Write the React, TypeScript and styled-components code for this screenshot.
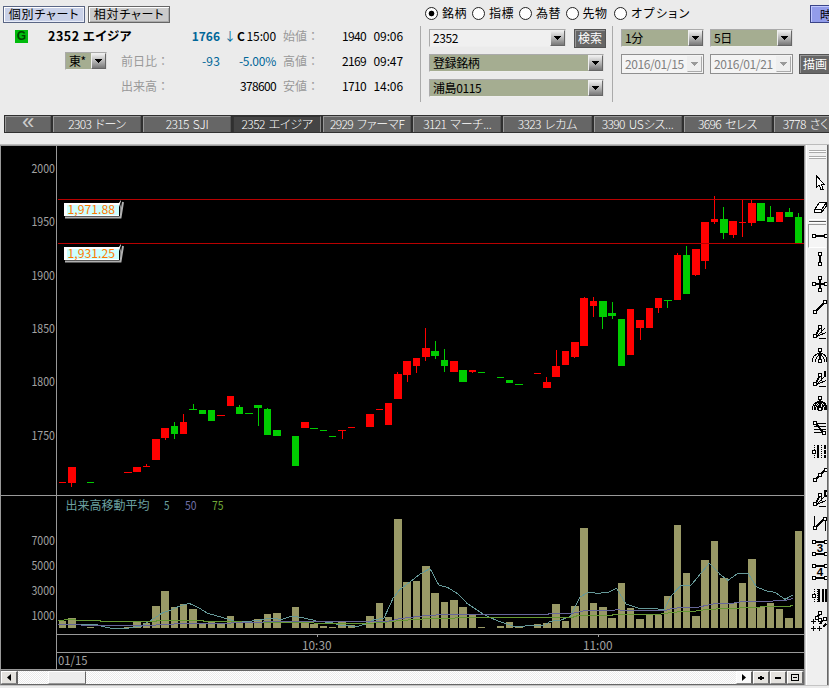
import type { ReactNode } from "react";
import styled, { createGlobalStyle, css } from "styled-components";

const GlobalStyle = createGlobalStyle`
  * {
    box-sizing: border-box;
  }

  body {
    margin: 0;
    background: #ebebeb;
    overflow: hidden;
  }
`;

const Page = styled.div`
  width: 829px;
  height: 688px;
  overflow: hidden;
  display: flex;
  flex-direction: column;
  background: #ebebeb;
  color: #000;
  font-family: "Noto Sans CJK JP", "Liberation Sans", sans-serif;
  font-size: 12px;
  line-height: 14px;
  white-space: nowrap;
`;

const Top = styled.header`
  height: 115px;
  flex: none;
  display: flex;
`;

const QuotePanel = styled.section`
  width: 420px;
  flex: none;
  padding-top: 6px;
`;

const ModeRow = styled.div`
  display: flex;
  gap: 3px;
  padding-left: 3px;
  height: 18px;
`;

const ModeButton = styled.button<{ $active?: boolean }>`
  width: 82px;
  height: 17px;
  padding: 0 0 1px;
  font: inherit;
  line-height: 12px;
  font-feature-settings: "palt";
  letter-spacing: 0.8px;
  color: #000;
  background: ${(p) => (p.$active ? "#c9d1e8" : "#cbcbcb")};
  border: 1px solid ${(p) => (p.$active ? "#5a6685" : "#666")};
  box-shadow: inset 1px 1px 0 #fff, inset -1px -1px 0 ${(p) => (p.$active ? "#e8ecf8" : "#aaa")};
`;

const QuoteRow = styled.div<{ $height: number }>`
  display: flex;
  align-items: center;
  height: ${(p) => p.$height}px;
`;

const Lead = styled.div<{ $pad: number }>`
  width: 190px;
  flex: none;
  display: flex;
  align-items: center;
  padding-left: ${(p) => p.$pad}px;
`;

const Badge = styled.span`
  width: 13px;
  height: 13px;
  background: #00bb0c;
  color: #004400;
  font: bold 12px/13px "Liberation Sans", sans-serif;
  text-align: center;
`;

const StockName = styled.strong`
  margin-left: 20px;
  font-size: 12.5px;
  font-feature-settings: "palt";
  letter-spacing: 0.5px;
`;

const digits = css`
  letter-spacing: -0.66px;
`;

// $loose widens values with narrow marks (colon, sign, point) to the digit pitch
const Num = styled.span<{ $width: number; $blue?: boolean; $bold?: boolean; $loose?: number }>`
  width: ${(p) => p.$width}px;
  flex: none;
  text-align: right;
  color: ${(p) => (p.$blue ? "#006699" : "#000")};
  font-weight: ${(p) => (p.$bold ? 700 : 400)};
  letter-spacing: ${(p) => (p.$bold ? 0 : (p.$loose ?? -0.66))}px;
`;

const Label = styled.span`
  width: 34px;
  flex: none;
  margin-left: 7px;
  color: #999;
`;

const LeadLabel = styled.span<{ $gap: number }>`
  margin-left: ${(p) => p.$gap}px;
  color: #999;
`;

const Arrow = styled.span`
  width: 11px;
  flex: none;
  padding-left: 4px;
  color: #006699;
`;

const Close = styled.b`
  width: 15px;
  flex: none;
  padding-left: 6px;
`;

const Controls = styled.section`
  flex: none;
  width: 409px;
  display: flex;
  flex-direction: column;
`;

const RadioRow = styled.div`
  display: flex;
  height: 26px;
  padding-left: 5px;
`;

const RadioItem = styled.label<{ $width: number; $wide?: boolean }>`
  width: ${(p) => p.$width}px;
  flex: none;
  display: flex;
  align-items: center;
  gap: 4px;
  font-feature-settings: "palt";
  letter-spacing: ${(p) => (p.$wide ? 1.4 : 0.4)}px;
`;

const Dot = styled.span<{ $on?: boolean }>`
  width: 13px;
  height: 13px;
  border-radius: 50%;
  border: 1px solid #222;
  background: ${(p) => (p.$on ? "radial-gradient(circle, #000 0 2.5px, #fff 3.2px)" : "#fff")};
`;

const ModeLink = styled.button`
  width: 40px;
  height: 18px;
  flex: none;
  margin-top: 5px;
  padding: 0 0 0 9px;
  text-align: left;
  font: inherit;
  line-height: 13px;
  background: #929cea;
  border: 1px solid #3a4488;
  box-shadow: inset 1px 1px 0 #c0c8ff;
`;

const Forms = styled.div`
  display: flex;
  height: 76px;
`;

const SymbolForm = styled.div`
  width: 192px;
  flex: none;
  display: flex;
  flex-direction: column;
  gap: 7px;
  padding: 3px 0 0 8px;
  border-left: 1px solid #aaa;
`;

const RangeForm = styled.div`
  display: flex;
  flex-direction: column;
  gap: 7px;
  padding: 3px 0 0 8px;
  border-left: 1px solid #aaa;
`;

const Line = styled.div<{ $gap: number; $lift?: boolean }>`
  display: flex;
  gap: ${(p) => p.$gap}px;
  margin-top: ${(p) => (p.$lift ? -1 : 0)}px;
`;

const SelectBox = styled.div<{ $width: number; $tone?: "plain" | "date" }>`
  width: ${(p) => p.$width}px;
  height: ${(p) => (p.$tone === "date" ? 20 : 18)}px;
  flex: none;
  display: flex;
  align-items: center;
  justify-content: space-between;
  padding-left: 3px;
  border: 1px solid #aaa;
  letter-spacing: -0.4px;
  ${(p) =>
    p.$tone === "date"
      ? css`
          border-color: #8f8f8f;
          color: #808080;
          background: #f4f4f4;
          padding-right: 1px;
        `
      : css`
          border-right-color: #ddd;
          border-bottom-color: #eee;
          background: ${p.$tone === "plain" ? "#f0f0f0" : "#a5ad91"};
        `}
`;

const DropButton = styled.span<{ $disabled?: boolean }>`
  width: 15px;
  height: 16px;
  flex: none;
  display: flex;
  align-items: center;
  justify-content: center;
  border: 1px solid ${(p) => (p.$disabled ? "#aaa" : "#666")};
  border-top-color: #eee;
  border-left-color: #eee;
  background: ${(p) => (p.$disabled ? "#eee" : "linear-gradient(#eee, #aaa 60%, #777)")};
  color: ${(p) => (p.$disabled ? "#999" : "#000")};
`;

const DarkButton = styled.button<{ $tall?: boolean }>`
  width: 32px;
  height: ${(p) => (p.$tall ? 20 : 19)}px;
  flex: none;
  padding: 0 0 1px;
  font: inherit;
  line-height: 14px;
  color: #fff;
  background: #666;
  border: 1px solid #555;
  box-shadow: inset 1px 1px 0 #999;
`;

const TabStrip = styled.nav`
  display: flex;
  flex: none;
  gap: 2px;
  height: 18px;
  margin: 0 0 11px 4px;
  padding: 1px;
  background: #303030;
`;

const Tab = styled.div<{ $width?: number; $active?: boolean }>`
  width: ${(p) => p.$width ?? 88.1}px;
  height: 16px;
  flex: none;
  display: flex;
  align-items: center;
  justify-content: center;
  gap: 4px;
  padding-bottom: 1px;
  color: #fff;
  background: ${(p) => (p.$active ? "#444" : "#666")};
  border-top: 1px solid ${(p) => (p.$active ? "#333" : "#999")};
  border-left: 1px solid ${(p) => (p.$active ? "#333" : "#999")};
  border-right: 1px solid ${(p) => (p.$active ? "#888" : "#555")};
  font-weight: 300;
`;

const Code = styled.span`
  ${digits}
`;

const Company = styled.span`
  font-feature-settings: "palt";
  letter-spacing: -0.2px;
`;

const Back = styled.span`
  font-size: 22px;
  line-height: 12px;
  padding-bottom: 4px;
  color: #ccc;
  font-family: "Liberation Sans", sans-serif;
`;

const Body = styled.main`
  display: flex;
  height: 542px;
  flex: none;
  border-top: 1px solid #bbb;
  border-bottom: 1px solid #c4c4c4;
`;

const ChartColumn = styled.div`
  width: 804px;
  flex: none;
`;

const ChartSvg = styled.svg`
  display: block;
  background: #000;

  text {
    font-family: "Noto Sans CJK JP", sans-serif;
    font-size: 12px;
    font-weight: 400;
    fill: #a2a2a2;
  }
`;

const ScrollBar = styled.div`
  display: flex;
  height: 15px;
  border-top: 1px solid #666;
  border-bottom: 1px solid #666;
  border-left: 1px solid #999;
  background: repeating-conic-gradient(#fff 0 25%, #eaeaea 0 50%) 0 0 / 2px 2px;
`;

const ScrollButton = styled.span<{ $width: number; $push?: boolean; $flat?: boolean }>`
  width: ${(p) => p.$width}px;
  height: 13px;
  flex: none;
  display: flex;
  align-items: center;
  justify-content: center;
  margin-left: ${(p) => (p.$push ? "auto" : "0")};
  background: ${(p) => (p.$flat ? "#fafafa" : "#e4e2de")};
  border: 1px solid #fff;
  border-right: 2px solid #666;
  border-bottom: 1px solid #888;
`;

const Thumb = styled.span`
  width: 38px;
  height: 13px;
  margin-left: 30px;
  background: #ededed;
  border: 1px solid #fff;
  border-right-color: #666;
  border-bottom-color: #999;
`;

const ToolBar = styled.aside`
  width: 25px;
  flex: none;
  display: flex;
  flex-direction: column;
  background: #efefef;
  border-left: 1px solid #999;
  border-right: 1px solid #999;
  box-shadow: inset 1px 0 0 #d0d0d0, inset 2px 0 0 #fff, inset -1px 0 0 #666;
  padding-top: 5px;
`;

const Grip = styled.div<{ $last?: boolean }>`
  width: 17px;
  height: 3px;
  margin: 0 0 ${(p) => (p.$last ? 12 : 3)}px 4px;
  border-top: 1px solid #aaa;
  border-bottom: 1px solid #aaa;
  background: #fff;
`;

const ToolDivider = styled.div`
  height: 5px;
  margin: 0 2px 0 4px;
  border-top: 1px solid #fff;
  background: linear-gradient(#efefef 1px, #555 1px 2px, #fff 2px 3px, #efefef 3px);
`;

const Tool = styled.div<{ $pressed?: boolean }>`
  height: 24px;
  flex: none;
  margin: 0 2px 0 3px;
  padding-left: 2px;
  border: 1px solid transparent;
  border-right: 0;
  ${(p) =>
    p.$pressed &&
    css`
      border-color: #999;
      border-bottom-color: #fff;
      background: #f5f5f5;
    `}

  svg {
    display: block;
    margin-top: -1px;
  }
`;

type Candle = {
  x: number;
  w: number;
  top: number;
  bottom: number;
  up: boolean;
  vol: number;
  wick?: [x: number, high: number, low: number];
};

const c = (
  x: number,
  w: number,
  top: number,
  bottom: number,
  dir: "u" | "d",
  vol: number,
  wick?: [number, number, number],
): Candle => ({ x, w, top, bottom, up: dir === "u", vol, wick });

const candles: Candle[] = [
  c(59, 7, 482, 483, "u", 621),
  c(68, 8, 467, 483, "u", 618, [71, 467, 487]),
  c(87, 7, 482, 483, "d", 627),
  c(124, 8, 472, 473, "u", 627),
  c(133, 8, 467, 472, "u", 622),
  c(143, 7, 466, 467, "u", 623, [146, 464, 467]),
  c(152, 8, 439, 460, "u", 606),
  c(161, 8, 428, 438, "u", 591, [165, 428, 440]),
  c(171, 7, 426, 434, "d", 607, [174, 422, 439]),
  c(180, 7, 422, 434, "u", 604, [183, 414, 434]),
  c(189, 8, 409, 410, "d", 609, [193, 404, 410]),
  c(199, 7, 410, 414, "d", 624),
  c(208, 7, 410, 421, "d", 622),
  c(217, 8, 415, 416, "u", 624),
  c(227, 7, 396, 406, "u", 616),
  c(236, 7, 407, 414, "d", 623, [239, 405, 414]),
  c(245, 8, 413, 414, "d", 623),
  c(254, 8, 405, 408, "d", 619, [258, 405, 426]),
  c(264, 7, 409, 435, "d", 614, [267, 408, 435]),
  c(273, 8, 430, 436, "d", 613),
  c(292, 7, 436, 466, "d", 607),
  c(301, 8, 422, 428, "u", 623),
  c(310, 8, 428, 429, "d", 624),
  c(320, 7, 430, 431, "d", 626),
  c(329, 7, 436, 437, "d", 627),
  c(338, 8, 430, 431, "u", 622, [342, 430, 439]),
  c(348, 7, 427, 428, "u", 625),
  c(366, 8, 414, 427, "u", 616),
  c(376, 7, 409, 410, "u", 603),
  c(385, 7, 403, 425, "u", 617),
  c(394, 8, 374, 399, "u", 519, [397, 372, 399]),
  c(403, 8, 361, 375, "u", 582, [407, 361, 382]),
  c(413, 7, 358, 366, "u", 581, [416, 358, 373]),
  c(422, 8, 348, 357, "u", 566, [425, 328, 361]),
  c(431, 8, 351, 356, "d", 593, [435, 341, 359]),
  c(441, 7, 360, 366, "d", 602, [444, 349, 372]),
  c(450, 8, 361, 372, "u", 600),
  c(459, 8, 370, 382, "d", 607),
  c(469, 7, 370, 372, "u", 614, [472, 370, 373]),
  c(478, 7, 372, 373, "d", 627),
  c(497, 7, 377, 378, "d", 626),
  c(506, 7, 380, 383, "d", 622),
  c(515, 8, 384, 385, "d", 626),
  c(534, 7, 373, 374, "u", 624),
  c(543, 8, 382, 388, "u", 623, [546, 377, 388]),
  c(552, 8, 366, 377, "u", 604, [556, 350, 377]),
  c(562, 7, 351, 365, "u", 621),
  c(571, 8, 342, 357, "u", 606, [574, 342, 358]),
  c(580, 8, 298, 346, "u", 528, [584, 297, 346]),
  c(590, 7, 301, 306, "u", 603, [593, 297, 317]),
  c(599, 8, 301, 317, "d", 607, [602, 301, 329]),
  c(608, 8, 313, 316, "d", 618, [612, 302, 319]),
  c(618, 7, 319, 366, "d", 583),
  c(627, 7, 309, 355, "u", 608),
  c(636, 8, 320, 328, "u", 619, [640, 320, 340]),
  c(646, 7, 308, 328, "u", 615),
  c(655, 7, 298, 308, "u", 615, [658, 298, 313]),
  c(664, 8, 300, 301, "d", 596, [667, 300, 308]),
  c(674, 7, 255, 300, "u", 525, [677, 253, 300]),
  c(683, 7, 255, 294, "d", 573, [686, 246, 294]),
  c(692, 8, 249, 275, "u", 616, [695, 249, 276]),
  c(701, 8, 222, 261, "u", 560, [705, 222, 269]),
  c(711, 7, 219, 222, "u", 541, [714, 196, 224]),
  c(720, 8, 219, 233, "d", 578, [723, 207, 239]),
  c(729, 8, 221, 235, "u", 603, [733, 221, 238]),
  c(739, 7, 222, 223, "u", 583, [742, 199, 237]),
  c(748, 8, 203, 223, "u", 559, [751, 200, 226]),
  c(757, 8, 203, 221, "d", 607),
  c(767, 7, 217, 222, "d", 603, [770, 206, 222]),
  c(776, 7, 212, 222, "u", 609),
  c(785, 8, 212, 217, "d", 618, [789, 208, 217]),
  c(795, 7, 217, 243, "d", 531, [798, 213, 243]),
];

const ma5 =
  "58,625 65,624 81,624 97,624.6 103,626.6 112,628.4 127,628.4 135,627 141,626.3 148,622 155,618 161,613.6 170,610.3 179,606.3 189,603.4 198,607.3 207,613 217,616 228,619 234,621 245,621.6 257,620.6 269,618.3 282,619.3 291,616.3 301,617.3 314,620.3 317,621.5 330,622.3 340,625 357,626.6 368,623.3 372,620.3 384,618 393,598.3 400,589.3 410,582 420,574 430,568.6 439,585.3 448,587.6 458,594 467,603.3 483,614 497,620.6 514,626.3 523,626.3 530,625.3 545,625 550,621.3 560,620.3 570,616.6 575,607 580,597 588,592.3 598,593.3 608,592.3 616.6,588.3 626,604 640,608.6 655,608.6 664,610 671,596 681,585.3 691,585.3 700,574.3 709.3,563.3 720,574.3 728,580.3 738,573.3 748,573.3 756.6,587 766.6,591 775,592.3 785,599.3 793,595";
const ma50 =
  "58,624.5 80,624.5 82,625.5 155,625.5 157,624.5 173,624.5 175,623.5 230,623.5 232,622.5 240,622.5 286,621.5 387,621.5 400,618.6 417,616.6 427,615.5 445,614.5 547,614.5 550,613.5 572,613.5 583,611 590,610.5 612,610.5 618,609.5 622,610.5 665,610.5 672,608.5 683,607.5 697,607.5 710,604.5 717,603.5 733,603.2 743,601.5 770,601.2 787,600 793,598.5";
const ma75 =
  "58,620.5 70,619.5 81,620.5 100,620.5 101,621.5 156,621.5 157,620.5 203,620.5 204,621.5 238,621.5 245,622.5 313,622.5 315,623.5 368,623.5 387,622 400,620.5 417,619.5 430,618.5 453,618.5 457,617.5 572,617.5 578,615.5 612,615.5 613,614.5 658,614.5 673,612.2 695,611.2 707,609.4 727,608.5 753,607.5 767,606.5 788,606.5 793,605.5";

const priceTicks: [string, number][] = [
  ["2000", 168.5],
  ["1950", 221.5],
  ["1900", 275.5],
  ["1850", 328.5],
  ["1800", 381.5],
  ["1750", 435.5],
];

const volumeTicks: [string, number][] = [
  ["7000", 540.5],
  ["5000", 565.5],
  ["3000", 590.5],
  ["1000", 615.5],
];

const AxisText = ({ x, y, children, fill }: { x: number; y: number; children: string; fill?: string }) => (
  <text
    x={x}
    y={y + 4.5}
    textLength={children.length * 6 - 0.5}
    lengthAdjust="spacingAndGlyphs"
    style={fill ? { fill } : undefined}
  >
    {children}
  </text>
);

const PriceTag = ({ y, value }: { y: number; value: string }) => (
  <g>
    <path d={`M65 ${y + 14.5}H120.5L123 ${y - 1}`} fill="none" stroke="#b0b0b0" strokeWidth="2" />
    <path d={`M64 ${y}H119L121 ${y - 3}L120 ${y + 13}H64Z`} fill="#fff" />
    <rect x="67" y={y + 2} width="52" height="10" fill="#ccffff" />
    <path d={`M119.5 ${y + 13}V${y + 4}L121.5 ${y - 2}`} fill="none" stroke="#000" />
    <AxisText x={67.5} y={y + 6.5} fill="#ff7800">
      {value}
    </AxisText>
  </g>
);

const Chart = () => (
  <ChartSvg width="804" height="525" viewBox="0 145 804 525">
    <g shapeRendering="crispEdges">
      {candles.map((k) => (
        <g key={k.x} fill={k.up ? "#ff0000" : "#00cc00"}>
          {k.wick && <rect x={k.wick[0]} y={k.wick[1]} width="1" height={k.wick[2] - k.wick[1]} />}
          <rect x={k.x} y={k.top} width={k.w} height={k.bottom - k.top} />
          <rect x={k.x} y={k.vol} width={k.w} height={628 - k.vol} fill="#999966" />
        </g>
      ))}
      <path d="M58 199.5H804M58 243.5H804" stroke="#b80000" />
      <g fill="none">
        <polyline points={ma5} stroke="#669999" />
        <polyline points={ma75} stroke="#669933" />
        <polyline points={ma50} stroke="#666699" />
      </g>
      <path
        d="M0 145.5H804M.5 145V670M56.5 145V670M0 495.5H804M56 634.5H804M56 652.5H804M0 669.5H804M317.5 635V637M598.5 635V637"
        stroke="#999"
        fill="none"
      />
    </g>
    {[...priceTicks, ...volumeTicks].map(([label, y]) => (
      <AxisText key={label} x={31.5} y={y}>
        {label}
      </AxisText>
    ))}
    <PriceTag y={203} value="1,971.88" />
    <PriceTag y={247} value="1,931.25" />
    <text x="65.5" y="510" style={{ fill: "#6ba0a0" }}>
      出来高移動平均
    </text>
    <AxisText x={164} y={505.5} fill="#6ba0a0">
      5
    </AxisText>
    <AxisText x={185} y={505.5} fill="#7070a8">
      50
    </AxisText>
    <AxisText x={212} y={505.5} fill="#70a838">
      75
    </AxisText>
    <AxisText x={58} y={660.5}>
      01/15
    </AxisText>
    <AxisText x={302} y={645.5}>
      10:30
    </AxisText>
    <AxisText x={583} y={645.5}>
      11:00
    </AxisText>
  </ChartSvg>
);

const Caret = () => (
  <svg width="7" height="4" viewBox="0 0 7 4" shapeRendering="crispEdges">
    <path d="M0 0h7v1h-1v1h-1v1h-1v1h-1v-1h-1v-1h-1v-1h-1z" fill="currentColor" />
  </svg>
);

const Select = ({ width, tone, children }: { width: number; tone?: "plain" | "date"; children: ReactNode }) => (
  <SelectBox $width={width} $tone={tone}>
    <span>{children}</span>
    <DropButton $disabled={tone === "date"}>
      <Caret />
    </DropButton>
  </SelectBox>
);

// 4x4 grab handle used by most of the drawing tools
const H = ({ x, y }: { x: number; y: number }) => (
  <rect x={x + 0.5} y={y + 0.5} width="3" height="3" fill="#fff" strokeWidth="1" />
);

const Thick = ({ d }: { d: string }) => <path d={d} strokeWidth="2" />;

const Fan = () => (
  <>
    <Thick d="M5 15L9 7" />
    <path d="M6 16L14 8M6 16.5L15 12.5M8 18.5H15M10 9V13" />
    <H x={7} y={5} />
    <H x={2} y={14} />
  </>
);

const Arcs = ({ dense }: { dense?: boolean }) => (
  <>
    <path d="M8 9.5C4 10 1.5 13 1.5 18M10 9.5C14 10 16 13 16 18M7 12C5 13 4.5 15 4.5 18M11 12C13 13 13.5 15 13.5 18" />
    {dense && <path d="M7 10.5C4 12 3 14 3 18M7.5 13.5C6.5 15 6 16 6 18M11 10.5C14 12 15 15 15 18M11 13.5C12 15 12 16 12 18" />}
    <Thick d="M9 7V15M7 11H11" />
    <H x={7} y={4} />
    <H x={7} y={15} />
  </>
);

const Cycle = ({ solid }: { solid?: boolean }) => (
  <>
    <path d="M3.5 5V19" strokeDasharray="1 1" />
    <H x={1} y={10} />
    {solid ? (
      <>
        <path d="M6 5V18" strokeDasharray="1 1" />
        <Thick d="M8 5V18M12 5V18M15 5V18" />
      </>
    ) : (
      <>
        <Thick d="M7 5V18" />
        <path d="M10.5 5V18" strokeDasharray="1 1" />
        <path d="M14 5V18" strokeWidth="2" strokeDasharray="4 1" />
      </>
    )}
  </>
);

const Wave = ({ n }: { n: string }) => (
  <>
    <Thick d="M4 6H14M4 18H14" />
    <H x={1} y={4} />
    <H x={13} y={4} />
    <H x={1} y={16} />
    <H x={13} y={16} />
    <text x="5.7" y="15.5" fontFamily="Liberation Sans, sans-serif" fontWeight="bold" fontSize="11.5" fill="#000" stroke="none">
      {n}
    </text>
  </>
);

const drawingTools: ReactNode[] = [
  <>
    <Thick d="M4 12H14" />
    <H x={1} y={10} />
    <H x={13} y={10} />
  </>,
  <>
    <Thick d="M9 8V15" />
    <H x={7} y={4} />
    <H x={7} y={14} />
  </>,
  <>
    <Thick d="M9 8V17M4 12H14" />
    <H x={7} y={4} />
    <H x={7} y={16} />
    <H x={1} y={10} />
    <H x={13} y={10} />
  </>,
  <>
    <Thick d="M5 15L13 7" />
    <H x={2} y={14} />
    <H x={12} y={4} />
  </>,
  <Fan />,
  <Arcs />,
  <>
    <Fan />
    <Thick d="M14 3V9" />
  </>,
  <Arcs dense />,
  <>
    <path d="M3 7.5H15M3 10.5H15M3 13.5H15M3 16.5H15" />
    <Thick d="M4 7L13 17" />
    <H x={2} y={5} />
    <H x={11} y={15} />
  </>,
  <Cycle />,
  <>
    <Thick d="M5 15L14 6" />
    <H x={2} y={14} />
    <H x={7} y={9} />
    <H x={13} y={4} />
  </>,
  <>
    <Fan />
    <path d="M16 3H14V8H16" strokeWidth="1.5" />
  </>,
  <>
    <path d="M3.5 4V15M14.5 8V19" />
    <Thick d="M5 15L12 8" />
    <H x={2} y={14} />
    <H x={12} y={5} />
  </>,
  <Wave n="3" />,
  <Wave n="4" />,
  <Cycle solid />,
  <>
    <Thick d="M5 11L8 7M9 16L12 12M12 19L15 16" />
    <H x={7} y={3} />
    <H x={4} y={8} />
    <H x={7} y={10} />
    <H x={12} y={9} />
    <path d="M0 13.5H5M2.5 11V16M0 20.5H5M2.5 18V23M6 20.5H11M8.5 18V23" />
  </>,
];

const ToolIcon = ({ children }: { children: ReactNode }) => (
  <svg width="16" height="24" viewBox="0 0 16 24" fill="none" stroke="#000" shapeRendering="crispEdges">
    {children}
  </svg>
);

const tabs: [string, string][] = [
  ["2303", "ドーン"],
  ["2315", "SJI"],
  ["2352", "エイジア"],
  ["2929", "ファーマF"],
  ["3121", "マーチ..."],
  ["3323", "レカム"],
  ["3390", "USシス..."],
  ["3696", "セレス"],
  ["3778", "さくら..."],
];

const radios: [string, number][] = [
  ["銘柄", 47],
  ["指標", 47],
  ["為替", 46.5],
  ["先物", 48.5],
  ["オプション", 196],
];

const App = () => {
  return (
    <Page>
      <GlobalStyle />
      <Top>
        <QuotePanel>
          <ModeRow>
            <ModeButton $active>個別チャート</ModeButton>
            <ModeButton>相対チャート</ModeButton>
          </ModeRow>
          <QuoteRow $height={24}>
            <Lead $pad={15}>
              <Badge>G</Badge>
              <StockName>2352 エイジア</StockName>
            </Lead>
            <Num $width={30} $blue $bold>1766</Num>
            <Arrow>↓</Arrow>
            <Close>C</Close>
            <Num $width={30} $loose={-0.1}>15:00</Num>
            <Label>始値：</Label>
            <Num $width={49}>1940</Num>
            <Num $width={37} $loose={-0.1}>09:06</Num>
          </QuoteRow>
          <QuoteRow $height={25}>
            <Lead $pad={65}>
              <Select width={42}>東*</Select>
              <LeadLabel $gap={14}>前日比：</LeadLabel>
            </Lead>
            <Num $width={30} $blue $loose={0.2}>-93</Num>
            <Num $width={56} $blue $loose={-0.25}>-5.00%</Num>
            <Label>高値：</Label>
            <Num $width={49}>2169</Num>
            <Num $width={37} $loose={-0.1}>09:47</Num>
          </QuoteRow>
          <QuoteRow $height={26}>
            <Lead $pad={121}>
              <LeadLabel $gap={0}>出来高：</LeadLabel>
            </Lead>
            <Num $width={86}>378600</Num>
            <Label>安値：</Label>
            <Num $width={49}>1710</Num>
            <Num $width={37} $loose={-0.1}>14:06</Num>
          </QuoteRow>
        </QuotePanel>

        <Controls>
          <RadioRow>
            {radios.map(([label, width], i) => (
              <RadioItem key={label} $width={width} $wide={label.length > 2}>
                <Dot $on={i === 0} />
                {label}
              </RadioItem>
            ))}
            <ModeLink>時</ModeLink>
          </RadioRow>
          <Forms>
            <SymbolForm>
              <Line $gap={8}>
                <Select width={137} tone="plain">2352</Select>
                <DarkButton>検索</DarkButton>
              </Line>
              <Line $gap={0} $lift>
                <Select width={175}>登録銘柄</Select>
              </Line>
              <Select width={175}>浦島0115</Select>
            </SymbolForm>
            <RangeForm>
              <Line $gap={6}>
                <Select width={83}>1分</Select>
                <Select width={83}>5日</Select>
              </Line>
              <Line $gap={6}>
                <Select width={83} tone="date">2016/01/15</Select>
                <Select width={83} tone="date">2016/01/21</Select>
                <DarkButton $tall>描画</DarkButton>
              </Line>
            </RangeForm>
          </Forms>
        </Controls>
      </Top>

      <TabStrip>
        <Tab $width={46}>
          <Back>«</Back>
        </Tab>
        {tabs.map(([code, name]) => (
          <Tab key={code} $active={code === "2352"} $width={code === "3778" ? 82 : undefined}>
            <Code>{code}</Code>
            <Company>{name}</Company>
          </Tab>
        ))}
      </TabStrip>

      <Body>
        <ChartColumn>
          <Chart />
          <ScrollBar>
            <ScrollButton $width={17}>
              <svg width="4" height="7" viewBox="0 0 4 7">
                <path d="M4 0V7L0 3.5Z" />
              </svg>
            </ScrollButton>
            <Thumb />
            <ScrollButton $width={17} $push $flat>
              <svg width="4" height="7" viewBox="0 0 4 7">
                <path d="M0 0V7L4 3.5Z" />
              </svg>
            </ScrollButton>
            <ScrollButton $width={17}>
              <svg width="6" height="4" viewBox="0 0 6 4" shapeRendering="crispEdges">
                <path d="M0 1H6V3H0ZM2 0H4V4H2Z" />
              </svg>
            </ScrollButton>
            <ScrollButton $width={17}>
              <svg width="6" height="2" viewBox="0 0 6 2">
                <path d="M0 0H6V2H0Z" />
              </svg>
            </ScrollButton>
            <ScrollButton $width={17}>
              <svg width="8" height="7" viewBox="0 0 8 7" shapeRendering="crispEdges">
                <path d="M.5 .5H7.5V6.5H.5ZM2 3.5H6" fill="none" stroke="#000" />
              </svg>
            </ScrollButton>
          </ScrollBar>
        </ChartColumn>
        <ToolBar>
          <Grip />
          <Grip $last />
          <Tool>
            <ToolIcon>
              <path d="M5.5 5V16.5L8 14L10 18.5H12L10.5 13.5H13.5Z" fill="#fff" />
            </ToolIcon>
          </Tool>
          <Tool>
            <ToolIcon>
              <path d="M3.5 14.5L8.5 7.5H15.5L10.5 14.5ZM3.5 14.5V17.5H10.5V14.5M10.5 17.5L15.5 11V7.5" fill="#fff" />
            </ToolIcon>
          </Tool>
          <ToolDivider />
          {drawingTools.map((icon, i) => (
            <Tool key={i} $pressed={i === 0}>
              <ToolIcon>{icon}</ToolIcon>
            </Tool>
          ))}
        </ToolBar>
      </Body>
    </Page>
  );
};

export default App;
